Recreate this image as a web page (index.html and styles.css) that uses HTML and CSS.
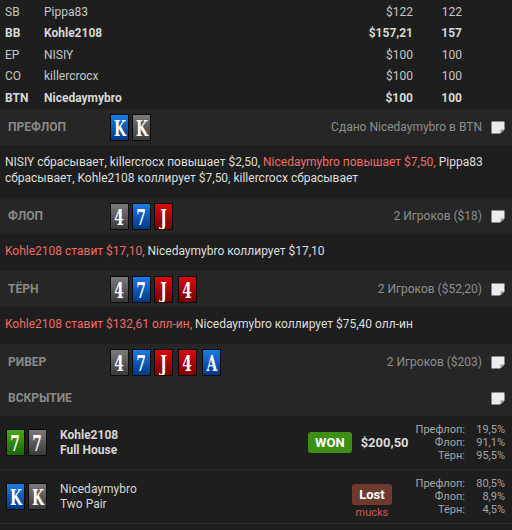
FILE: index.html
```html
<!DOCTYPE html>
<html lang="ru">
<head>
  <meta charset="UTF-8" />
  <title>Раздача</title>
  <link rel="stylesheet" href="styles.css">
</head>
<body>

  <!-- Players -->
  <div class="players">
    <div class="prow"><span class="pos">SB</span><span class="pname">Pippa83</span><span class="stack">$122</span><span class="bbs">122</span></div>
    <div class="prow bold"><span class="pos">BB</span><span class="pname">Kohle2108</span><span class="stack">$157,21</span><span class="bbs">157</span></div>
    <div class="prow"><span class="pos">EP</span><span class="pname">NISIY</span><span class="stack">$100</span><span class="bbs">100</span></div>
    <div class="prow"><span class="pos">CO</span><span class="pname">killercrocx</span><span class="stack">$100</span><span class="bbs">100</span></div>
    <div class="prow bold"><span class="pos">BTN</span><span class="pname">Nicedaymybro</span><span class="stack">$100</span><span class="bbs">100</span></div>
  </div>

  <!-- Preflop -->
  <div class="street-head">
    <span class="street-name">Префлоп</span>
    <div class="cards">
      <span class="card blue"><span class="rank">K</span></span>
      <span class="card gray"><span class="rank">K</span></span>
    </div>
    <span class="street-info">Сдано Nicedaymybro в BTN</span>
    <svg class="note" viewBox="0 0 14 13"><path d="M0.5 0.5H13.5V8.5L9 12.5H0.5Z" fill="#ececec"/><path d="M13.5 8.5H9.5V12.5Z" fill="#9a9a9a"/></svg>
  </div>
  <div class="actions">
    NISIY сбрасывает, killercrocx повышает $2,50, <span class="hl">Nicedaymybro повышает $7,50,</span> Pippa83 сбрасывает, Kohle2108 коллирует $7,50, killercrocx сбрасывает
  </div>

  <!-- Flop -->
  <div class="street-head">
    <span class="street-name">Флоп</span>
    <div class="cards">
      <span class="card gray"><span class="rank">4</span></span>
      <span class="card blue"><span class="rank">7</span></span>
      <span class="card red"><span class="rank">J</span></span>
    </div>
    <span class="street-info">2 Игроков ($18)</span>
    <svg class="note" viewBox="0 0 14 13"><path d="M0.5 0.5H13.5V8.5L9 12.5H0.5Z" fill="#ececec"/><path d="M13.5 8.5H9.5V12.5Z" fill="#9a9a9a"/></svg>
  </div>
  <div class="actions">
    <span class="hl">Kohle2108 ставит $17,10,</span> Nicedaymybro коллирует $17,10
  </div>

  <!-- Turn -->
  <div class="street-head">
    <span class="street-name">Тёрн</span>
    <div class="cards">
      <span class="card gray"><span class="rank">4</span></span>
      <span class="card blue"><span class="rank">7</span></span>
      <span class="card red"><span class="rank">J</span></span>
      <span class="card red next"><span class="rank">4</span></span>
    </div>
    <span class="street-info">2 Игроков ($52,20)</span>
    <svg class="note" viewBox="0 0 14 13"><path d="M0.5 0.5H13.5V8.5L9 12.5H0.5Z" fill="#ececec"/><path d="M13.5 8.5H9.5V12.5Z" fill="#9a9a9a"/></svg>
  </div>
  <div class="actions">
    <span class="hl">Kohle2108 ставит $132,61 олл-ин,</span> Nicedaymybro коллирует $75,40 олл-ин
  </div>

  <!-- River -->
  <div class="street-head">
    <span class="street-name">Ривер</span>
    <div class="cards">
      <span class="card gray"><span class="rank">4</span></span>
      <span class="card blue"><span class="rank">7</span></span>
      <span class="card red"><span class="rank">J</span></span>
      <span class="card red next"><span class="rank">4</span></span>
      <span class="card blue next"><span class="rank">A</span></span>
    </div>
    <span class="street-info">2 Игроков ($203)</span>
    <svg class="note" viewBox="0 0 14 13"><path d="M0.5 0.5H13.5V8.5L9 12.5H0.5Z" fill="#ececec"/><path d="M13.5 8.5H9.5V12.5Z" fill="#9a9a9a"/></svg>
  </div>

  <!-- Showdown -->
  <div class="street-head">
    <span class="street-name">Вскрытие</span>
    <span class="street-info"></span>
    <svg class="note" viewBox="0 0 14 13"><path d="M0.5 0.5H13.5V8.5L9 12.5H0.5Z" fill="#ececec"/><path d="M13.5 8.5H9.5V12.5Z" fill="#9a9a9a"/></svg>
  </div>

  <div class="show-row">
    <div class="cards">
      <span class="card green"><span class="rank">7</span></span>
      <span class="card gray"><span class="rank">7</span></span>
    </div>
    <div class="who winner">
      <div>Kohle2108</div>
      <div>Full House</div>
    </div>
    <div class="result">
      <span class="badge won">WON</span>
      <span class="amount">$200,50</span>
    </div>
    <div class="equity">
      <span>Префлоп:</span><span>19,5%</span>
      <span>Флоп:</span><span>91,1%</span>
      <span>Тёрн:</span><span>95,5%</span>
    </div>
  </div>

  <div class="show-row">
    <div class="cards">
      <span class="card blue"><span class="rank">K</span></span>
      <span class="card gray"><span class="rank">K</span></span>
    </div>
    <div class="who">
      <div>Nicedaymybro</div>
      <div>Two Pair</div>
    </div>
    <div class="result lost-col">
      <span class="badge lost">Lost</span>
      <span class="mucks">mucks</span>
    </div>
    <div class="equity">
      <span>Префлоп:</span><span>80,5%</span>
      <span>Флоп:</span><span>8,9%</span>
      <span>Тёрн:</span><span>4,5%</span>
    </div>
  </div>

  <div class="show-more"><div class="scroll-thumb"></div></div>

</body>
</html>
```

FILE: styles.css
```css
* {
  box-sizing: border-box;
}

body {
  margin: 0;
  width: 512px;
  background: #1e1e1e;
  color: #dcdcdc;
  font-family: Roboto, 'Noto Sans', sans-serif;
  font-size: 12px;
  overflow: hidden;
}

/* Players table */
.players {
  padding: 1px 50px 0 5px;
  height: 109px;
}
.prow {
  display: grid;
  grid-template-columns: 39px 1fr 90px 49px;
  height: 21.5px;
  align-items: center;
  color: #c6c6c6;
}
.prow.bold {
  font-weight: 700;
  color: #d8d8d8;
}
.stack, .bbs {
  text-align: right;
}

/* Street headers */
.street-head {
  display: flex;
  align-items: center;
  height: 36px;
  padding: 0 7px 0 8px;
  background: #262626;
}
.street-name {
  width: 102px;
  font-weight: 700;
  text-transform: uppercase;
  color: #8a8a8a;
}
.street-info {
  margin-left: auto;
  color: #8e8e8e;
}
.note {
  width: 14px;
  height: 13px;
  margin-left: 9px;
}

/* Cards */
.cards {
  display: flex;
  gap: 3px;
}
.card {
  display: flex;
  justify-content: center;
  align-items: center;
  width: 19px;
  height: 27px;
  border: 1px solid #0c0c0c;
  color: #fff;
  overflow: hidden;
}
.rank {
  display: inline-block;
  font-family: 'DejaVu Serif', serif;
  font-weight: 700;
  font-size: 23px;
  line-height: 17px;
  height: 17px;
  transform: scaleX(0.6);
}
.card.next {
  margin-left: 2px;
}
.card.gray {
  background: linear-gradient(#7a7a7a, #3a3a3a);
}
.card.blue {
  background: linear-gradient(#1b7ce6, #00378a);
}
.card.red {
  background: linear-gradient(#dc0a0a, #7a0000);
}
.card.green {
  background: linear-gradient(#4aa81a, #1d6606);
}

/* Actions */
.actions {
  padding: 9px 5px 12px;
  line-height: 16px;
  color: #dedede;
}
.hl {
  color: #ec6d69;
}

/* Showdown */
.show-row {
  display: flex;
  align-items: center;
  height: 54px;
  padding: 0 7px 0 6px;
  border-bottom: 1px solid #2a2a2a;
}
.who {
  margin-left: 13px;
  line-height: 15px;
  color: #d6d6d6;
}
.who.winner {
  font-weight: 700;
}
.result {
  margin-left: auto;
  display: flex;
  align-items: center;
  gap: 9px;
  margin-right: 7px;
}
.result.lost-col {
  flex-direction: column;
  gap: 1px;
  margin-right: 24px;
  padding-top: 10px;
}
.badge {
  display: inline-block;
  height: 21px;
  line-height: 21px;
  padding: 0 7px;
  border-radius: 3px;
  color: #fff;
  font-weight: 700;
  font-size: 13px;
}
.badge.won {
  background: #3c8f13;
}
.badge.lost {
  background: #6e3a2d;
}
.amount {
  font-weight: 700;
  font-size: 13px;
  color: #dadada;
}
.mucks {
  font-size: 11px;
  color: #d45a5a;
  line-height: 14px;
}
.equity {
  display: grid;
  grid-template-columns: auto 40px;
  font-size: 11px;
  line-height: 13px;
  color: #a6a6a6;
}
.equity span {
  text-align: right;
}

.show-more {
  padding: 6px 0 0 8px;
}
.scroll-thumb {
  width: 180px;
  height: 3px;
  background: #3a3a3a;
}
```
